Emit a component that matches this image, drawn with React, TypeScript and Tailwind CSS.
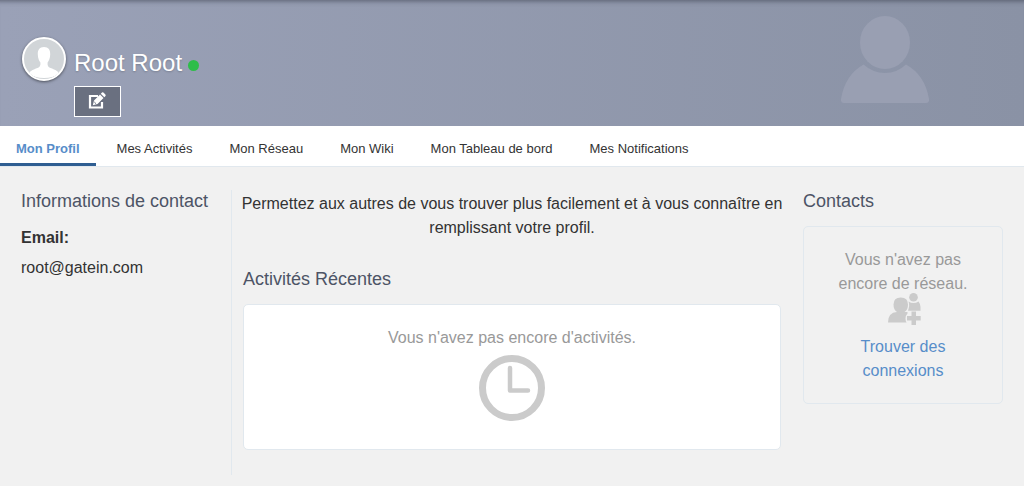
import React from 'react';

const tabs = [
  'Mon Profil',
  'Mes Activités',
  'Mon Réseau',
  'Mon Wiki',
  'Mon Tableau de bord',
  'Mes Notifications',
];

function BannerSilhouette() {
  return (
    <svg aria-hidden="true" viewBox="0 0 88 88" className="absolute top-4 right-[95px] h-[88px] w-[88px] fill-[#999fb2]">
      <ellipse cx="44" cy="26.5" rx="25" ry="26.5" />
      <path d="M22.500 48.500 Q32 57 44 57 Q56 57 65 48.500 Q84 59 88 83 Q88.500 87 85 87 H3 Q-.5 87 0 83 Q4 59 22.500 48.500 Z" />
    </svg>
  );
}

function Avatar() {
  return (
    <div className="h-11 w-11 shrink-0 overflow-hidden rounded-full border-2 border-white bg-[#d1d5d8] shadow-[0_1px_3px_rgba(0,0,0,0.5)]">
      <svg role="img" aria-label="Root Root" viewBox="0 0 40 40" className="h-full w-full fill-white">
        <path d="M20 8 C24.500 8 26.500 11 26.200 15.500 C26 19.500 25 21.500 23.600 23.500 C23.300 26.500 24 28 26.500 29 C31 30.700 33.500 31.500 35 34.500 Q29 39 20 39 Q11 39 5 34.500 C6.500 31.500 9 30.700 13.500 29 C16 28 16.700 26.500 16.400 23.500 C15 21.500 14 19.500 13.800 15.500 C13.500 11 15.500 8 20 8 Z" />
      </svg>
    </div>
  );
}

function EditIcon() {
  return (
    <svg aria-hidden="true" viewBox="0 0 18 18" className="h-[18px] w-[18px]">
      <path d="M10 4 H2 V15.500 H14 V10" fill="none" stroke="white" strokeWidth="2.200" />
      <path d="M4.800 13.200 L6 8.500 L12 2.500 L15.500 6 L9.500 12 Z M12.800 1.700 L14 .5 Q14.700 0 15.400 .6 L17.400 2.600 Q18 3.300 17.500 4 L16.300 5.200 Z" fill="white" />
      <path d="M6.300 10 L8 11.700" stroke="#6a7080" strokeWidth="1" />
    </svg>
  );
}

function ClockIcon() {
  return (
    <svg aria-hidden="true" viewBox="0 0 66 66" className="h-[66px] w-[66px]" fill="none" stroke="#cbcbcb">
      <circle cx="33" cy="33" r="29.500" strokeWidth="7" />
      <path d="M31 13 V35.500 H49" strokeWidth="4.500" strokeLinecap="round" strokeLinejoin="round" />
    </svg>
  );
}

function AddContactsIcon() {
  return (
    <svg aria-hidden="true" viewBox="0 0 33 33" className="h-[33px] w-[33px] fill-[#cbcbcb]">
      <circle cx="25.500" cy="4.300" r="4.300" />
      <path d="M20.500 8.500 Q25.500 11.500 30.500 8.500 Q32.500 11 32.500 14 V17.800 H20 Q22 12 20.500 8.500 Z" />
      <path d="M5.500 11.500 Q5.500 4.500 12.800 4.500 Q20 4.500 20 11.500 Q20 17 16.500 19 H19.500 V20.500 Q17.500 22.500 17.500 25.500 Q17.500 28 18.500 29.500 H0 Q0 19.500 9 19 Q5.500 17 5.500 11.500 Z" />
      <path d="M23.500 18.500 H28 V23 H32.700 V27.500 H28 V32 H23.500 V27.500 H19 V23 H23.500 Z" />
    </svg>
  );
}

export default function App() {
  return (
    <div className="min-h-screen bg-[#f1f1f1] font-['Liberation_Sans',Arial,sans-serif] text-base leading-6 text-[#333]">
      <header className="relative bg-linear-to-r from-[#9aa1b7] to-[#8a92a5] px-[22px] pt-[37px] pb-[9px] shadow-[inset_0_6px_5px_-5px_rgba(60,65,80,0.7)]">
        <BannerSilhouette />
        <div className="flex gap-2">
          <Avatar />
          <div className="pt-3">
            <div className="flex items-center gap-1.5">
              <h1 className="text-2xl leading-7 text-white [text-shadow:0_1px_2px_rgba(0,0,0,0.2)]">Root Root</h1>
              <span role="img" aria-label="En ligne" className="mt-1 h-[11px] w-[11px] rounded-full bg-[#2ebd4a]" />
            </div>
            <button type="button" aria-label="Modifier le profil" className="mt-[9px] flex h-[31px] w-[47px] items-start border border-white bg-[#6a7080] pt-[5px] pl-[13px]">
              <EditIcon />
            </button>
          </div>
        </div>
      </header>

      <nav className="flex gap-[5px] border-b border-[#e1e8ee] bg-white text-[13px] leading-5">
        {tabs.map((tab, index) => (
          <a
            key={tab}
            href="#"
            aria-current={index === 0 ? 'page' : undefined}
            className={
              index === 0
                ? 'border-b-3 border-[#2f5e92] px-4 pt-[13px] pb-1 font-bold text-[#578dc9]'
                : 'border-b-3 border-transparent px-4 pt-[13px] pb-1'
            }
          >
            {tab}
          </a>
        ))}
      </nav>

      <main className="flex px-[21px] pt-[23px] pb-3">
        <aside className="h-[285px] w-[211px] shrink-0 border-r border-[#e1e8ee]">
          <h2 className="text-lg leading-[22px] text-[#4d5466]">Informations de contact</h2>
          <dl className="pt-3.5">
            <dt className="font-bold">Email:</dt>
            <dd className="pt-1.5">root@gatein.com</dd>
          </dl>
        </aside>

        <section className="ml-[11px] flex-1">
          <p className="-mx-1 pt-0.5 text-center">
            Permettez aux autres de vous trouver plus facilement et à vous connaître en remplissant votre profil.
          </p>
          <h2 className="pt-7 text-lg leading-[22px] text-[#4d5466]">Activités Récentes</h2>
          <div className="mt-3.5 flex flex-col items-center gap-[5px] rounded-[5px] border border-[#e1e8ee] bg-white pt-[21px] pb-7 text-[#999]">
            <p>Vous n'avez pas encore d'activités.</p>
            <ClockIcon />
          </div>
        </section>

        <aside className="ml-[22px] w-[200px] shrink-0">
          <h2 className="text-lg leading-[22px] text-[#4d5466]">Contacts</h2>
          <div className="mt-3.5 flex flex-col items-center rounded-[5px] border border-[#e1e8ee] px-7 pt-[21px] pb-5 text-center text-[#999]">
            <p>Vous n'avez pas encore de réseau.</p>
            <div className="-mt-[3px] pl-[3px]">
              <AddContactsIcon />
            </div>
            <a href="#" className="px-4 pt-[9px] text-[#578dc9]">Trouver des connexions</a>
          </div>
        </aside>
      </main>
    </div>
  );
}
